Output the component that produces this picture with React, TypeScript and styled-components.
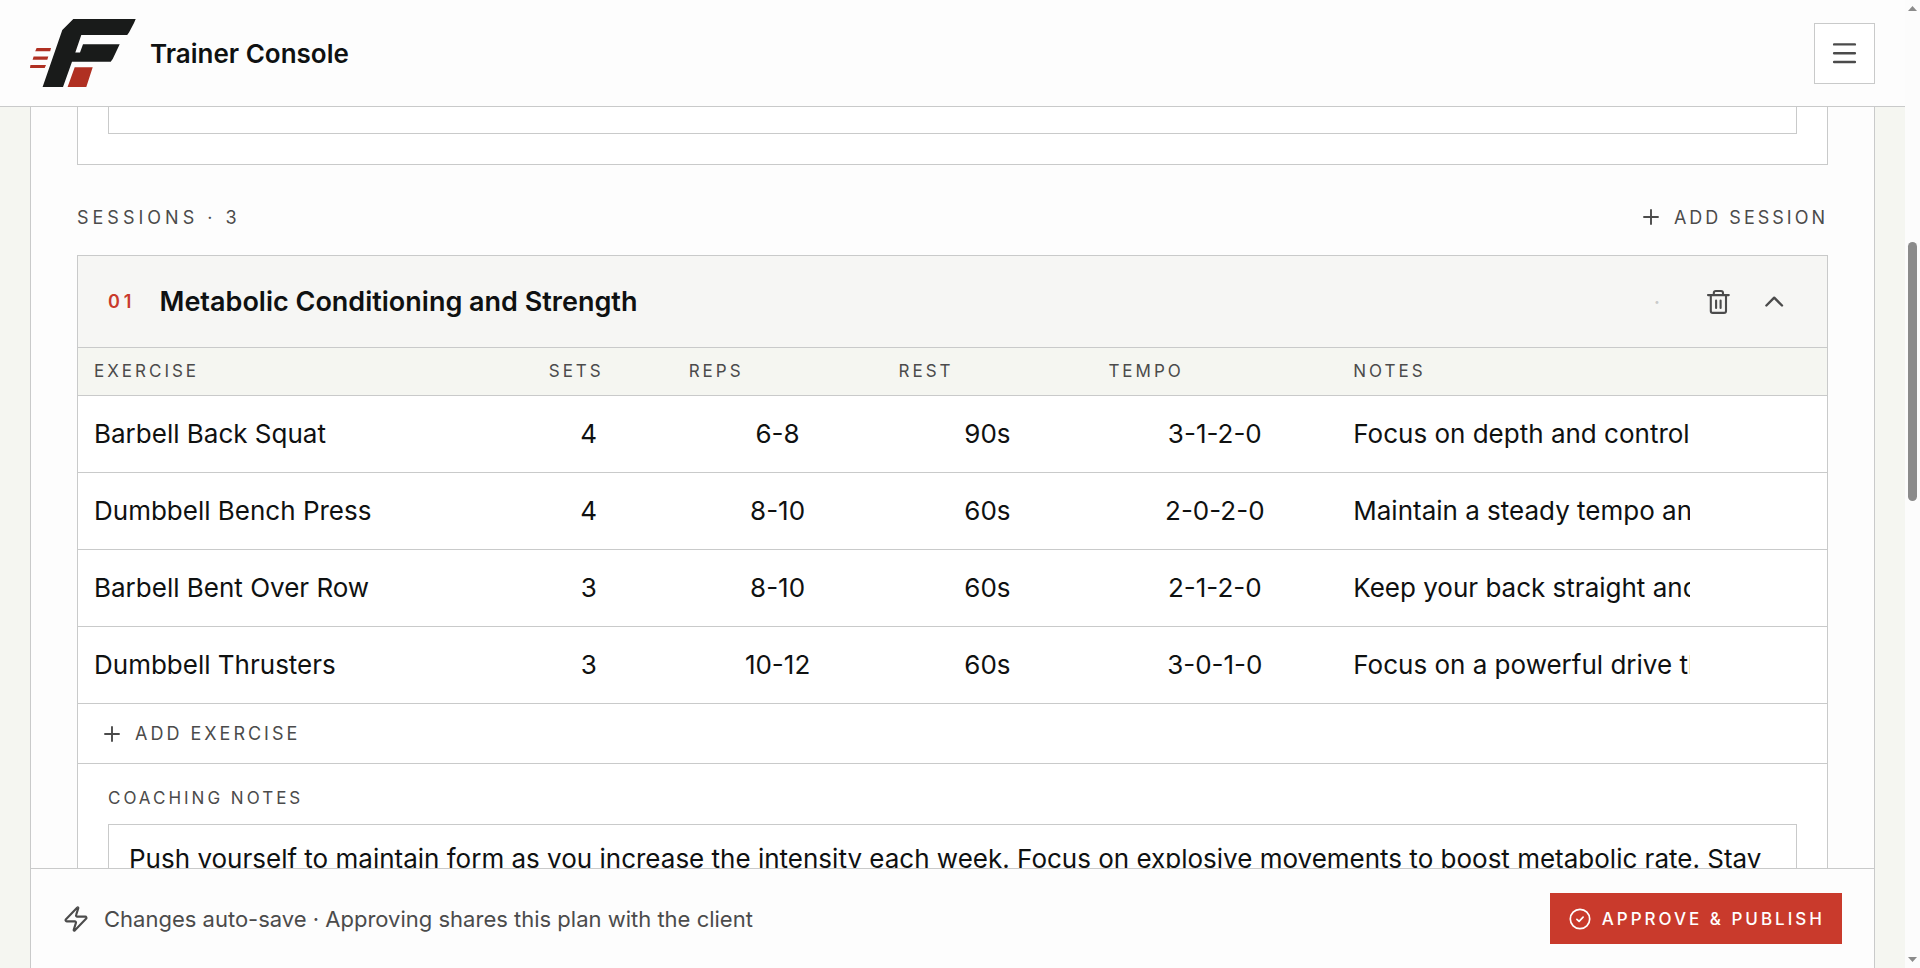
import React from 'react';
import styled, { createGlobalStyle } from 'styled-components';

const colors = {
  page: '#f5f6f1',
  panel: '#fdfdfd',
  card: '#ffffff',
  cardHeader: '#f6f6f4',
  line: '#c9caca',
  ink: '#0f1111',
  muted: '#4b4b4b',
  red: '#c93a2c',
};

const GlobalStyle = createGlobalStyle`
  *, *::before, *::after { box-sizing: border-box; }
  body {
    margin: 0;
    background: ${colors.page};
    color: ${colors.ink};
    font-family: Inter, "Liberation Sans", sans-serif;
    font-size: 26px;
  }
  button, input, textarea {
    margin: 0;
    padding: 0;
    border: 0;
    border-radius: 0;
    background: none;
    color: inherit;
    font: inherit;
    letter-spacing: inherit;
  }
  button { cursor: pointer; }
`;

const Window = styled.div`
  display: flex;
  height: 100vh;
  overflow: hidden;
`;

const Page = styled.div`
  flex: 1;
  min-width: 0;
  display: flex;
  flex-direction: column;
`;

const TopBar = styled.header`
  flex: none;
  display: flex;
  align-items: center;
  justify-content: space-between;
  height: 107px;
  padding: 0 30px;
  background: ${colors.panel};
  border-bottom: 1px solid ${colors.line};
`;

const Brand = styled.a`
  display: flex;
  align-items: center;
  gap: 14px;
  color: inherit;
  text-decoration: none;
  font-weight: 600;
`;

const MenuButton = styled.button`
  display: grid;
  place-items: center;
  width: 61px;
  height: 61px;
  border: 1px solid ${colors.line};
  background: ${colors.card};
  color: ${colors.muted};
`;

const Body = styled.div`
  flex: 1;
  min-height: 0;
  display: flex;
  padding: 0 30px;
`;

const Panel = styled.main`
  flex: 1;
  min-width: 0;
  display: flex;
  flex-direction: column;
  background: ${colors.panel};
  border: solid ${colors.line};
  border-width: 0 1px;
`;

const PlanContent = styled.div`
  flex: 1;
  min-height: 0;
  overflow: hidden;
  padding: 0 46px;
`;

const Card = styled.section`
  background: ${colors.card};
  border: 1px solid ${colors.line};
`;

/* The overview card is scrolled most of the way under the top bar. */
const OverviewCard = styled(Card)`
  margin-top: -90px;
  padding: 30px;
`;

const TextArea = styled.textarea<{ $height: number }>`
  display: block;
  width: 100%;
  height: ${({ $height }) => $height}px;
  padding: 14px 20px;
  border: 1px solid ${colors.line};
  line-height: 40px;
  resize: none;
  overflow: hidden;
`;

const SectionBar = styled.div`
  display: flex;
  align-items: center;
  justify-content: space-between;
  height: 44px;
  margin: 30px 0 16px;
`;

const SectionTitle = styled.h2`
  margin: 0;
  color: ${colors.muted};
  font-size: 18px;
  font-weight: 400;
  letter-spacing: 4px;
`;

const AddButton = styled.button`
  display: flex;
  align-items: center;
  gap: 11px;
  color: ${colors.muted};
  font-size: 18px;
  letter-spacing: 3px;
`;

const SessionHeader = styled.header`
  display: flex;
  align-items: center;
  height: 92px;
  padding: 0 25px 0 30px;
  background: ${colors.cardHeader};
  border-bottom: 1px solid ${colors.line};
`;

const SessionNumber = styled.span`
  margin-right: 24px;
  color: ${colors.red};
  font-size: 18px;
  font-weight: 600;
  letter-spacing: 4px;
`;

const SessionName = styled.h3`
  flex: 1;
  margin: 0;
  font-size: 27px;
  font-weight: 600;
`;

const Separator = styled.span`
  margin-right: 30px;
  color: ${colors.line};
  font-size: 22px;
`;

const IconButton = styled.button`
  display: grid;
  place-items: center;
  width: 56px;
  height: 56px;
  color: ${colors.muted};
`;

const Table = styled.table`
  width: 100%;
  table-layout: fixed;
  border-spacing: 0;
`;

const HeadCell = styled.th<{ $width: number }>`
  width: ${({ $width }) => $width}%;
  height: 48px;
  padding: 0 16px 2px;
  background: ${colors.page};
  border-bottom: 1px solid ${colors.line};
  color: ${colors.muted};
  font-size: 17px;
  font-weight: 400;
  letter-spacing: 3px;
  text-align: left;
`;

const Cell = styled.td`
  height: 77px;
  padding: 0 16px 2px;
  border-bottom: 1px solid ${colors.line};
`;

const CellInput = styled.input<{ $centered?: boolean; $width?: number }>`
  display: block;
  width: ${({ $width }) => ($width ? `${$width}px` : '100%')};
  height: 40px;
  text-align: ${({ $centered }) => ($centered ? 'center' : 'left')};
`;

const AddExerciseBar = styled.div`
  display: flex;
  align-items: center;
  height: 60px;
  padding: 0 22px;
  border-bottom: 1px solid ${colors.line};
`;

const CoachingNotes = styled.div`
  padding: 24px 30px 30px;
`;

const FieldLabel = styled.label`
  display: block;
  margin-bottom: 16px;
  color: ${colors.muted};
  font-size: 17px;
  line-height: 20px;
  letter-spacing: 3px;
`;

const ActionBar = styled.footer`
  flex: none;
  display: flex;
  align-items: center;
  justify-content: space-between;
  height: 100px;
  padding: 0 32px 0 31px;
  border-top: 1px solid ${colors.line};
`;

const SaveNote = styled.p`
  display: flex;
  align-items: center;
  gap: 14px;
  margin: 0;
  color: ${colors.muted};
  font-size: 22px;
`;

const PublishButton = styled.button`
  display: flex;
  align-items: center;
  gap: 9px;
  height: 51px;
  padding: 0 17px;
  background: ${colors.red};
  color: #ffffff;
  font-size: 17px;
  font-weight: 500;
  letter-spacing: 3px;
`;

const ScrollRail = styled.div`
  flex: none;
  display: flex;
  flex-direction: column;
  align-items: center;
  width: 15px;
  padding: 6px 0;
  background: #fcfcfc;
`;

const ScrollSpace = styled.div<{ $share: number }>`
  flex: ${({ $share }) => $share} 0 0;
`;

const ScrollThumb = styled.div`
  flex: 259 0 0;
  width: 9px;
  border-radius: 5px;
  background: #8b8b8b;
`;

const Icon = styled.svg`
  display: block;
  flex: none;
  fill: none;
  stroke: currentColor;
  stroke-linecap: round;
  stroke-linejoin: round;
`;

const Logo = () => (
  <svg width="106" height="68" viewBox="0 0 106 68" aria-hidden="true">
    <path
      fill="#191b1a"
      d="M43.3 0H105.7L104 4 99 13.5 97.2 16H51.3L45.3 33.4H50L53 25.2H89.7L82.7 40 80.7 42.8H42L33 68H12.6L32.3 11Z"
    />
    <path
      fill="#b03022"
      d="M44.7 48.3H62.7L56.3 68H37.6ZM6.6 29H21L20.2 32.3H5.2ZM3.6 37.6H18.3L17.3 40.8H2.6ZM0.4 46H16L14.7 49H0Z"
    />
  </svg>
);

const MenuIcon = () => (
  <Icon width="27" height="27" viewBox="0 0 27 27" strokeWidth="2.4" aria-hidden="true">
    <path d="M3.1 4.4H23.9M3.1 13.2H23.9M3.1 22H23.9" />
  </Icon>
);

const PlusIcon = () => (
  <Icon width="24" height="24" viewBox="0 0 24 24" strokeWidth="1.9" aria-hidden="true">
    <path d="M12 5V19M5 12H19" />
  </Icon>
);

const TrashIcon = () => (
  <Icon width="28" height="28" viewBox="0 0 28 28" strokeWidth="2.1" aria-hidden="true">
    <path d="M4 7.1H24.8M9.8 7V5Q9.8 3 11.8 3H17Q19 3 19 5V7M6.8 7.3V22.9Q6.8 24.9 8.8 24.9H20Q22 24.9 22 22.9V7.3M12.1 12.5V19.9M16.6 12.5V19.9" />
  </Icon>
);

const ChevronIcon = () => (
  <Icon width="28" height="28" viewBox="0 0 28 28" strokeWidth="2.4" aria-hidden="true">
    <path d="M6.4 17.5L14.2 9.7 22 17.5" />
  </Icon>
);

const BoltIcon = () => (
  <Icon width="28" height="28" viewBox="0 0 24 24" strokeWidth="1.8" aria-hidden="true">
    <path d="M4 14a1 1 0 0 1-.78-1.63l9.9-10.2a.5.5 0 0 1 .86.46l-1.92 6.02A1 1 0 0 0 13 10h7a1 1 0 0 1 .78 1.63l-9.9 10.2a.5.5 0 0 1-.86-.46l1.92-6.02A1 1 0 0 0 11 14z" />
  </Icon>
);

const CheckCircleIcon = () => (
  <Icon width="26" height="26" viewBox="0 0 26 26" strokeWidth="1.7" aria-hidden="true">
    <circle cx="13" cy="13" r="9.7" />
    <path d="M9.9 13.3L12.1 15.3 16.1 11.2" />
  </Icon>
);

type Exercise = { name: string; sets: string; reps: string; rest: string; tempo: string; notes: string };

const columns = [
  { label: 'EXERCISE', width: 26 },
  { label: 'SETS', width: 8 },
  { label: 'REPS', width: 12 },
  { label: 'REST', width: 12 },
  { label: 'TEMPO', width: 14 },
  { label: 'NOTES', width: 28 },
];

const exercises: Exercise[] = [
  { name: 'Barbell Back Squat', sets: '4', reps: '6-8', rest: '90s', tempo: '3-1-2-0', notes: 'Focus on depth and control' },
  { name: 'Dumbbell Bench Press', sets: '4', reps: '8-10', rest: '60s', tempo: '2-0-2-0', notes: 'Maintain a steady tempo and' },
  { name: 'Barbell Bent Over Row', sets: '3', reps: '8-10', rest: '60s', tempo: '2-1-2-0', notes: 'Keep your back straight and' },
  { name: 'Dumbbell Thrusters', sets: '3', reps: '10-12', rest: '60s', tempo: '3-0-1-0', notes: 'Focus on a powerful drive th' },
];

const coachingNotes =
  'Push yourself to maintain form as you increase the intensity each week. Focus on explosive movements to boost metabolic rate. Stay';

export default function App() {
  return (
    <>
      <GlobalStyle />
      <Window>
        <Page>
          <TopBar>
            <Brand href="#">
              <Logo />
              Trainer Console
            </Brand>
            <MenuButton type="button" aria-label="Menu">
              <MenuIcon />
            </MenuButton>
          </TopBar>
          <Body>
            <Panel>
              <PlanContent>
                <OverviewCard>
                  <TextArea $height={86} aria-label="Overview" />
                </OverviewCard>
                <SectionBar>
                  <SectionTitle>SESSIONS · 3</SectionTitle>
                  <AddButton type="button">
                    <PlusIcon />
                    ADD SESSION
                  </AddButton>
                </SectionBar>
                <Card>
                  <SessionHeader>
                    <SessionNumber>01</SessionNumber>
                    <SessionName>Metabolic Conditioning and Strength</SessionName>
                    <Separator>·</Separator>
                    <IconButton type="button" aria-label="Delete session">
                      <TrashIcon />
                    </IconButton>
                    <IconButton type="button" aria-label="Collapse session">
                      <ChevronIcon />
                    </IconButton>
                  </SessionHeader>
                  <Table>
                    <thead>
                      <tr>
                        {columns.map((column) => (
                          <HeadCell key={column.label} $width={column.width} scope="col">
                            {column.label}
                          </HeadCell>
                        ))}
                      </tr>
                    </thead>
                    <tbody>
                      {exercises.map((exercise) => (
                        <tr key={exercise.name}>
                          <Cell><CellInput defaultValue={exercise.name} aria-label="Exercise" /></Cell>
                          <Cell><CellInput $centered $width={80} defaultValue={exercise.sets} aria-label="Sets" /></Cell>
                          <Cell><CellInput $centered defaultValue={exercise.reps} aria-label="Reps" /></Cell>
                          <Cell><CellInput $centered defaultValue={exercise.rest} aria-label="Rest" /></Cell>
                          <Cell><CellInput $centered defaultValue={exercise.tempo} aria-label="Tempo" /></Cell>
                          <Cell><CellInput $width={337} defaultValue={exercise.notes} aria-label="Notes" /></Cell>
                        </tr>
                      ))}
                    </tbody>
                  </Table>
                  <AddExerciseBar>
                    <AddButton type="button">
                      <PlusIcon />
                      ADD EXERCISE
                    </AddButton>
                  </AddExerciseBar>
                  <CoachingNotes>
                    <FieldLabel htmlFor="coaching-notes">COACHING NOTES</FieldLabel>
                    <TextArea id="coaching-notes" $height={150} defaultValue={coachingNotes} />
                  </CoachingNotes>
                </Card>
              </PlanContent>
              <ActionBar>
                <SaveNote>
                  <BoltIcon />
                  Changes auto-save · Approving shares this plan with the client
                </SaveNote>
                <PublishButton type="button">
                  <CheckCircleIcon />
                  APPROVE &amp; PUBLISH
                </PublishButton>
              </ActionBar>
            </Panel>
          </Body>
        </Page>
        <ScrollRail aria-hidden="true">
          <svg width="9" height="5" viewBox="0 0 9 5"><path d="M4.5 0L9 5H0Z" fill="#8b8b8b" /></svg>
          <ScrollSpace $share={231} />
          <ScrollThumb />
          <ScrollSpace $share={456} />
          <svg width="9" height="5" viewBox="0 0 9 5"><path d="M0 0H9L4.5 5Z" fill="#8b8b8b" /></svg>
        </ScrollRail>
      </Window>
    </>
  );
}
